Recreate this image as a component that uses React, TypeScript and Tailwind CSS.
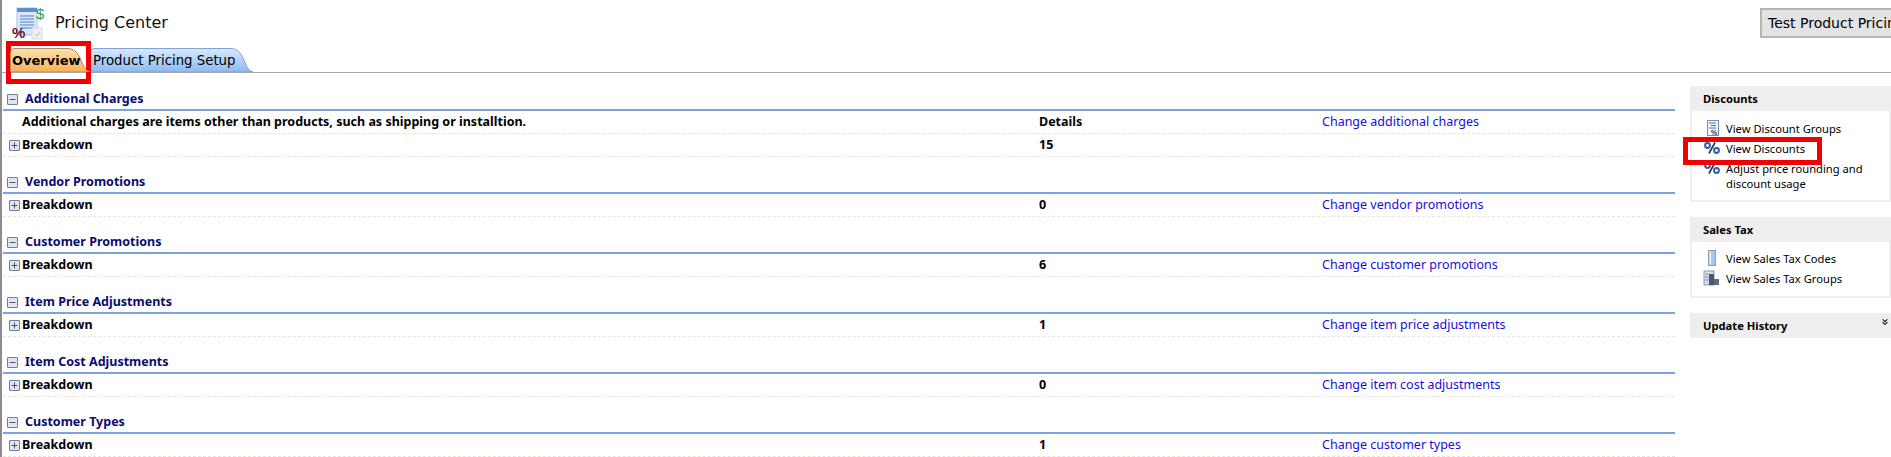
import type { ReactNode } from "react";
import { ChevronsDown, Minus, Plus } from "lucide-react";

const sections = [
  { title: "Additional Charges", count: "15", link: "Change additional charges", intro: true },
  { title: "Vendor Promotions", count: "0", link: "Change vendor promotions" },
  { title: "Customer Promotions", count: "6", link: "Change customer promotions" },
  { title: "Item Price Adjustments", count: "1", link: "Change item price adjustments" },
  { title: "Item Cost Adjustments", count: "0", link: "Change item cost adjustments" },
  { title: "Customer Types", count: "1", link: "Change customer types" },
];

function ToggleBox({ open }: { open?: boolean }) {
  const Icon = open ? Minus : Plus;
  return (
    <span className="flex h-[11px] w-[11px] shrink-0 items-center justify-center rounded-[1px] border border-[#6f7f99] bg-[#dfe6f2]">
      <Icon size={9} strokeWidth={2} className="text-[#1b2a4a]" />
    </span>
  );
}

function PricingIcon() {
  return (
    <svg width="36" height="34" viewBox="0 0 36 34" className="shrink-0">
      <rect x="6" y="2" width="20" height="27" fill="#dbe8f8" stroke="#a9c3e8" />
      <rect x="6" y="2" width="20" height="4" fill="#5d8fd0" />
      <path d="M9 10h14M9 13h14M9 16h14M9 19h14M9 22h14" stroke="#7aa3da" strokeWidth="1.5" />
      <rect x="21" y="22" width="10" height="11" fill="#eef0f2" stroke="#d5d8de" />
      <path d="M24 28l2 2 3-4" stroke="#b8bcc4" fill="none" />
      <text x="25" y="13" fontSize="15" fill="#2f9a3c" fontFamily="Liberation Sans, sans-serif">$</text>
      <text x="1" y="32" fontSize="15" fontWeight="700" fill="#6d0f1e" fontFamily="Liberation Sans, sans-serif">%</text>
    </svg>
  );
}

function PercentIcon() {
  return (
    <svg width="16" height="12" viewBox="0 0 16 12">
      <circle cx="3.5" cy="3.5" r="2.4" fill="none" stroke="#2f5db0" strokeWidth="2" />
      <circle cx="12.5" cy="8.5" r="2.4" fill="none" stroke="#2f5db0" strokeWidth="2" />
      <path d="M11 0.5L5 11.5" stroke="#26334f" strokeWidth="1.6" />
    </svg>
  );
}

function SheetIcon() {
  return (
    <svg width="18" height="16" viewBox="0 0 18 16">
      <rect x="4.5" y="0.5" width="11" height="15" fill="#f4f7fc" stroke="#6f8fc0" />
      <path d="M6 3h7M8 5.5h5M6 8h7" stroke="#4a6fae" />
      <text x="8" y="14.5" fontSize="7" fontWeight="700" fill="#334" fontFamily="Liberation Sans, sans-serif">%</text>
    </svg>
  );
}

function CodesIcon() {
  return (
    <svg width="18" height="16" viewBox="0 0 18 16">
      <rect x="5.5" y="0.5" width="7" height="15" fill="#a9c6f2" stroke="#8a9cb8" />
      <rect x="6.5" y="1.5" width="1.5" height="13" fill="#e8f0fc" />
    </svg>
  );
}

function GroupsIcon() {
  return (
    <svg width="18" height="16" viewBox="0 0 18 16">
      <rect x="1" y="1" width="10" height="14" fill="#cfdcee" stroke="#8a9cb8" />
      <path d="M2.5 4h3M2.5 7h3M2.5 10h3" stroke="#7f93b3" />
      <rect x="6" y="4" width="5" height="11" fill="#4a5568" />
      <rect x="11" y="9" width="5" height="6" fill="#5f6b7a" />
    </svg>
  );
}

function SideLink({ icon, label }: { icon: ReactNode; label: string }) {
  return (
    <div className="flex items-start">
      <span className="mr-[3px] flex h-[20px] w-[22px] shrink-0 items-center justify-center">{icon}</span>
      <span className="pt-[3px] leading-[15px]">{label}</span>
    </div>
  );
}

function SidePanel({ title, children }: { title: string; children: ReactNode }) {
  return (
    <div className="border-x-2 border-b-2 border-[#eeeeee]">
      <div className="flex h-[25px] items-center bg-[#eeeeee] pl-[11px] pt-[2px] font-bold text-black">{title}</div>
      {children}
    </div>
  );
}

function Tab({ label, width, active }: { label: string; width: number; active?: boolean }) {
  const id = active ? "tab-active" : "tab-idle";
  return (
    <div className={active ? "relative z-10 h-[24px] w-[80px]" : "relative h-[24px] w-[163px]"}>
      <svg width={width} height="24" viewBox={`0 0 ${width} 24`} className="absolute inset-0">
        <defs>
          <linearGradient id={id} x1="0" y1="0" x2="0" y2="1">
            <stop offset="0" stopColor={active ? "#ffe0ad" : "#dbe9fb"} />
            <stop offset="1" stopColor={active ? "#fdb152" : "#8abaf5"} />
          </linearGradient>
        </defs>
        <path
          d={`M0.5 24V5Q0.5 0.5 5 0.5H${width - 22}Q${width - 15} 0.5 ${width - 11} 8L${width - 6} 19Q${width - 4} 23 ${width} 24Z`}
          fill={`url(#${id})`}
          stroke={active ? "#a08f70" : "#7fa4d8"}
        />
      </svg>
      <span className={active ? "relative flex h-full items-center pl-[2px] pt-[2px] font-bold" : "relative flex h-full items-center pl-[3px] pt-[2px] text-[13.3px]"}>
        {label}
      </span>
    </div>
  );
}

export default function App() {
  return (
    <div className="h-[457px] w-[1891px] overflow-hidden border-l-2 border-[#8c8c8c] bg-white font-['Noto_Sans','DejaVu_Sans',sans-serif] text-[12.5px] text-black">
      <div className="flex h-[48px] items-start justify-between">
        <div className="flex items-center pl-[9px] pt-[6px]">
          <PricingIcon />
          <span className="ml-[8px] mt-[-1px] font-['DejaVu_Sans',sans-serif] text-[16px] text-[#111]">Pricing Center</span>
        </div>
        <div className="mt-[8px] flex h-[30px] w-[131px] items-center overflow-hidden whitespace-nowrap border-y-2 border-l-2 border-[#b5b5b5] bg-[#e3e3e3] pl-[6px] font-['DejaVu_Sans',sans-serif] text-[14px]">
          Test Product Pricing
        </div>
      </div>

      <div className="flex h-[25px] items-end border-b border-[#a8a8a8] pl-[8px] font-['DejaVu_Sans',sans-serif] text-[13px]">
        <Tab label="Overview" width={80} active />
        <Tab label="Product Pricing Setup" width={163} />
      </div>

      <div className="relative flex">
        <div className="w-[1673px] shrink-0 pl-[1px] pt-[15px]">
          {sections.map((s) => (
            <div key={s.title} className="mb-[14px]">
              <div className="flex h-[23px] items-center border-b-2 border-[#7ea3dc] pl-[4px] pt-[1px]">
                <ToggleBox open />
                <span className="ml-[7px] font-bold text-[#0b0b6e]">{s.title}</span>
              </div>
              {s.intro && (
                <div className="grid h-[23px] grid-cols-[1036px_283px_1fr] items-center border-b border-dashed border-[#e6e6dc] font-bold">
                  <span className="pl-[19px]">Additional charges are items other than products, such as shipping or installtion.</span>
                  <span>Details</span>
                  <a className="font-normal text-[#1a0dd8]">{s.link}</a>
                </div>
              )}
              <div className="grid h-[23px] grid-cols-[1036px_283px_1fr] items-center border-b border-dashed border-[#e6e6dc] font-bold">
                <span className="flex items-center gap-[2px] pl-[6px]">
                  <ToggleBox />
                  Breakdown
                </span>
                <span>{s.count}</span>
                {!s.intro && <a className="font-normal text-[#1a0dd8]">{s.link}</a>}
              </div>
            </div>
          ))}
        </div>

        <div className="ml-[15px] flex-1 pt-[13px] text-[11.2px]">
          <SidePanel title="Discounts">
            <div className="pb-[9px] pl-[9px] pr-[15px] pt-[7px]">
              <SideLink icon={<SheetIcon />} label="View Discount Groups" />
              <SideLink icon={<PercentIcon />} label="View Discounts" />
              <SideLink icon={<PercentIcon />} label="Adjust price rounding and discount usage" />
            </div>
          </SidePanel>
          <div className="mt-[15px]">
            <SidePanel title="Sales Tax">
              <div className="pb-[8px] pl-[9px] pt-[6px]">
                <SideLink icon={<CodesIcon />} label="View Sales Tax Codes" />
                <SideLink icon={<GroupsIcon />} label="View Sales Tax Groups" />
              </div>
            </SidePanel>
          </div>
          <div className="mt-[15px] flex h-[25px] items-center justify-between bg-[#eeeeee] pl-[13px] pr-[1px] pt-[2px] font-bold">
            Update History
            <ChevronsDown size={10} strokeWidth={2.5} className="mb-[9px]" />
          </div>
        </div>
      </div>

      <div className="absolute left-[6px] top-[41px] h-[43px] w-[85px] border-[5px] border-[#f00000]" />
      <div className="absolute left-[1683px] top-[137px] h-[28px] w-[139px] border-[5px] border-[#f00000]" />
    </div>
  );
}
